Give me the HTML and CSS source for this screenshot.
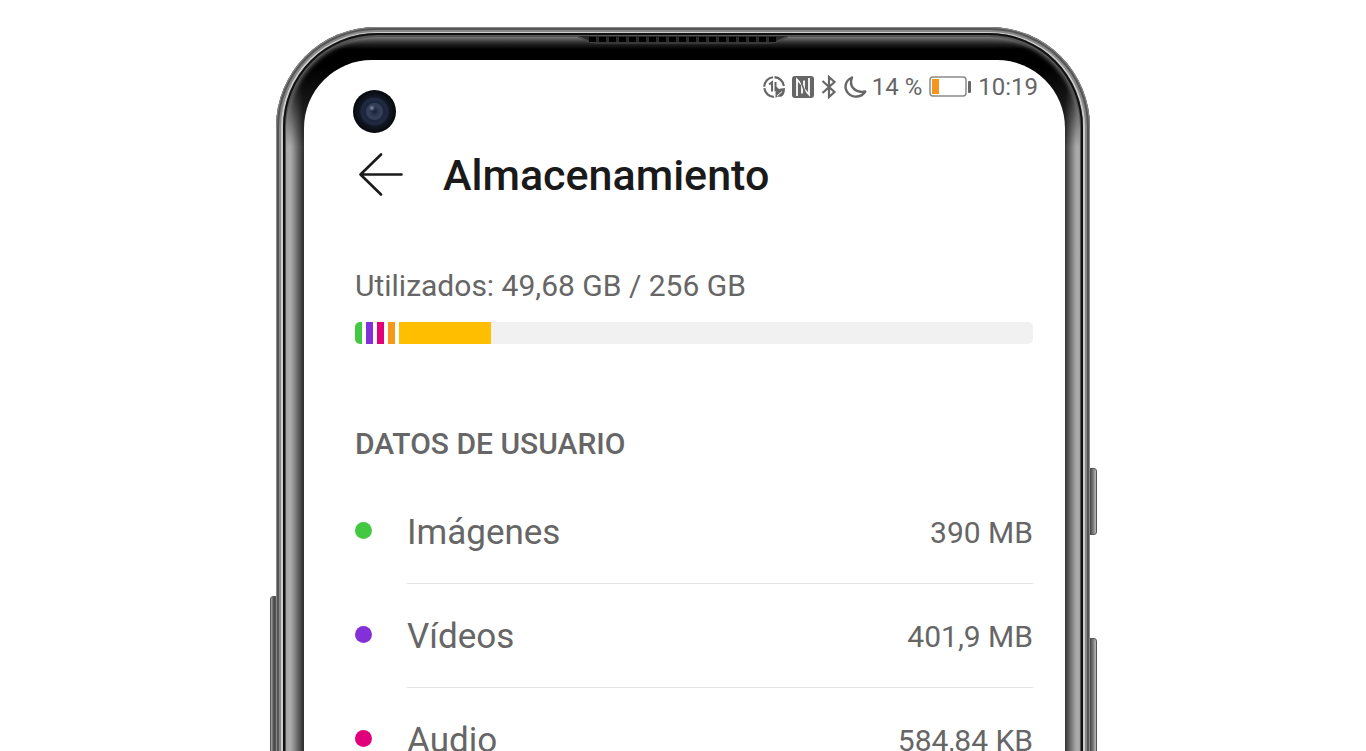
FILE: index.html
```
<!DOCTYPE html>
<html lang="es">
<head>
    <meta charset="UTF-8">
    <meta name="viewport" content="width=device-width, initial-scale=1.0">
    <title>Almacenamiento</title>
    <link rel="stylesheet" href="styles.css">
</head>
<body>
    <div class="phone">
        <!-- Side keys -->
        <span class="side-key key-left"></span>
        <span class="side-key key-volume"></span>
        <span class="side-key key-power"></span>

        <div class="phone-edge">
            <div class="phone-rim">
                <div class="phone-bezel">
                    <svg class="speaker" viewBox="0 0 210 8" aria-hidden="true">
                        <path d="M0 0H210L198 5Q195 7 190 7H20Q15 7 12 5Z" fill="#2b2b2b"/>
                        <path d="M0 1L12 6Q15 7 20 7H190Q195 7 198 6L210 1" fill="none" stroke="#484848"/>
                        <path d="M11 3.500H198" stroke="#000" stroke-width="5" stroke-dasharray="7 3"/>
                    </svg>

                    <main class="screen">
                        <span class="camera"></span>

                        <!-- Status bar -->
                        <div class="status-bar">
                            <svg class="status-icon icon-data" viewBox="0 0 24 24" aria-hidden="true">
                                <path d="M12 21.8A9.8 9.8 0 1 1 21.800 11" fill="none" stroke="#666" stroke-width="2.200" stroke-dasharray="14 1.500"/>
                                <path d="M7 9.500L10 7.200V16.500M13.500 7V15.500H17L14 12.500" fill="none" stroke="#666" stroke-width="2"/>
                                <path d="M13.500 19.500C13 15 17 13.500 23 13C23 19 21 23 15.500 21.500L13.500 23Z" fill="#666"/>
                                <path d="M15 21L20 16.500" stroke="#fff"/>
                            </svg>
                            <svg class="status-icon icon-nfc" viewBox="0 0 24 24" aria-hidden="true">
                                <rect x="1" y="1" width="22" height="22" rx="3" fill="#666"/>
                                <path d="M6 21V4.500L11 10V18.500" fill="none" stroke="#fff" stroke-width="1.800"/>
                                <path d="M18 3V19.500L13 14V5.500" fill="none" stroke="#fff" stroke-width="1.800"/>
                                <path d="M8 1.500L16 22.500" fill="none" stroke="#666" stroke-width="1.600"/>
                            </svg>
                            <svg class="status-icon icon-bluetooth" viewBox="0 0 18 24" aria-hidden="true">
                                <path d="M2.500 6L14.500 17L9 22V2L14.500 7L2.500 18" fill="none" stroke="#666" stroke-width="2.200"/>
                            </svg>
                            <svg class="status-icon icon-moon" viewBox="0 0 24 24" aria-hidden="true">
                                <path d="M9 2.500C2 5.500 .8 13 5 18C10 23.500 18.500 22.500 22.300 16.500C12 18.500 5.500 11 9 2.500Z" fill="none" stroke="#666" stroke-width="2.400" stroke-linejoin="round"/>
                            </svg>
                            <span class="battery-level">14 %</span>
                            <svg class="icon-battery" viewBox="0 0 42 22" aria-hidden="true">
                                <rect x="1" y="1" width="36" height="19" rx="3" fill="none" stroke="#8a8a8a" stroke-width="1.500"/>
                                <rect x="3" y="3" width="7" height="15" fill="#f7941d"/>
                                <rect x="39" y="5" width="3" height="12" rx="1" fill="#666"/>
                            </svg>
                            <time class="clock">10:19</time>
                        </div>

                        <header class="app-header">
                            <button class="back-btn" type="button" aria-label="Atrás">
                                <svg viewBox="0 0 44 44" aria-hidden="true">
                                    <path d="M22 1.500L1.500 21.500L22 41.500M1.500 21.500H42.500" fill="none" stroke="#1a1a1a" stroke-width="2.600" stroke-linecap="round" stroke-linejoin="round"/>
                                </svg>
                            </button>
                            <h1 class="app-title">Almacenamiento</h1>
                        </header>

                        <!-- Storage usage -->
                        <section class="usage">
                            <p class="usage-text">Utilizados: 49,68 GB / 256 GB</p>
                            <div class="usage-bar">
                                <span class="segment segment-images"></span>
                                <span class="segment segment-videos"></span>
                                <span class="segment segment-audio"></span>
                                <span class="segment segment-docs"></span>
                                <span class="segment segment-apps"></span>
                                <span class="segment-free"></span>
                            </div>
                        </section>

                        <section class="user-data">
                            <h2 class="section-title">DATOS DE USUARIO</h2>
                            <ul class="data-list">
                                <li class="data-item">
                                    <span class="dot dot-images"></span>
                                    <div class="data-row">
                                        <span class="data-name">Imágenes</span>
                                        <span class="data-size">390 MB</span>
                                    </div>
                                </li>
                                <li class="data-item">
                                    <span class="dot dot-videos"></span>
                                    <div class="data-row">
                                        <span class="data-name">Vídeos</span>
                                        <span class="data-size">401,9 MB</span>
                                    </div>
                                </li>
                                <li class="data-item">
                                    <span class="dot dot-audio"></span>
                                    <div class="data-row">
                                        <span class="data-name">Audio</span>
                                        <span class="data-size">584,84 KB</span>
                                    </div>
                                </li>
                            </ul>
                        </section>
                    </main>
                </div>
            </div>
        </div>
    </div>
</body>
</html>
```

FILE: styles.css
```
* {
    margin: 0;
    padding: 0;
    box-sizing: border-box;
}

body {
    font-family: Roboto, 'Noto Sans', sans-serif;
    background: #fff;
    color: #666;
    height: 100vh;
    padding-top: 27px;
    overflow: hidden;
}

/* Phone frame */
.phone {
    position: relative;
    width: 100%;
    max-width: 814px;
    margin: 0 auto;
}

.phone-edge {
    position: relative;
    padding: 6px 7px 0;
    border-radius: 100px 100px 0 0;
    background: #ccc;
    box-shadow: inset 0 0 0 1px #888, inset 0 0 0 3px #555, inset 0 0 0 5px #888;
}

.phone-rim {
    padding: 4px 3px 0;
    border-radius: 94px 94px 0 0;
    background: #555;
    box-shadow: inset 0 0 0 2px #111;
}

.phone-bezel {
    position: relative;
    padding: 23px 15px 0 18px;
    border-radius: 91px 91px 0 0;
    background:
        linear-gradient(to bottom, #666 0, #222 7px, #000 12px, #000 30px, transparent 110px),
        linear-gradient(to right, #bbb 0, #aaa 5px, #333 17px, #222 50%, #333 calc(100% - 15px), #aaa calc(100% - 4px), #bbb 100%);
    box-shadow: inset 0 0 5px #888;
}

.speaker {
    position: absolute;
    top: -1px;
    left: 50%;
    width: 210px;
    height: 8px;
    transform: translateX(-50%);
}

.side-key {
    position: absolute;
    width: 8px;
    border: 1px solid #555;
    background: linear-gradient(to right, #444, #777 50%, #bbb);
}

.key-left {
    left: -6px;
    top: 569px;
    height: 200px;
    border-radius: 3px 0 0 0;
    background: linear-gradient(to right, #aaa, #444 50%, #666);
}

.key-volume {
    right: -7px;
    top: 441px;
    height: 67px;
    border-radius: 0 3px 3px 0;
}

.key-power {
    right: -7px;
    top: 611px;
    height: 160px;
    border-radius: 0 3px 0 0;
}

/* Screen */
.screen {
    position: relative;
    min-height: 720px;
    padding: 13px 32px 0 51px;
    border-radius: 68px 68px 0 0;
    background: #fff;
}

.camera {
    position: absolute;
    top: 30px;
    left: 49px;
    width: 43px;
    height: 43px;
    border-radius: 50%;
    background:
        radial-gradient(circle at 44% 42%, rgba(190, 205, 230, 0.6) 0, transparent 3px),
        radial-gradient(circle, #18213a 0, #34405a 6px, #323d58 8px, #1b253c 9px, #202b42 13px, #111722 15px, #090c13 20px, #000 22px);
}

/* Status bar */
.status-bar {
    display: flex;
    align-items: center;
    justify-content: flex-end;
    gap: 5px;
    margin-right: -5px;
    font-size: 24px;
    line-height: 28px;
}

.status-icon {
    width: 24px;
    height: 24px;
}

.icon-bluetooth {
    width: 18px;
}

.icon-battery {
    width: 42px;
    height: 22px;
    margin: 0 2px;
}

/* Header */
.app-header {
    display: flex;
    align-items: center;
    gap: 40px;
    margin-top: 49px;
    padding-left: 4px;
}

.back-btn {
    width: 44px;
    height: 44px;
    border: none;
    background: none;
    cursor: pointer;
}

.back-btn svg {
    display: block;
}

.app-title {
    color: #1a1a1a;
    font-size: 43px;
    font-weight: 500;
    line-height: 50px;
}

/* Storage usage */
.usage {
    margin-top: 68px;
}

.usage-text {
    font-size: 30px;
    line-height: 36px;
}

.usage-bar {
    display: flex;
    height: 22px;
    margin-top: 18px;
    border-radius: 5px;
    overflow: hidden;
}

.segment {
    width: 7px;
    margin-right: 4px;
}

.segment-images,
.dot-images {
    background: #43c844;
}

.segment-videos,
.dot-videos {
    background: #8430d8;
}

.segment-audio,
.dot-audio {
    background: #e1007a;
}

.segment-docs {
    background: #f7981d;
}

.segment-apps {
    width: 92px;
    margin-right: 0;
    background: #ffbf00;
}

.segment-free {
    flex: 1;
    background: #f1f1f1;
}

/* User data */
.user-data {
    margin-top: 82px;
}

.section-title {
    font-size: 30px;
    font-weight: 500;
    line-height: 36px;
}

.data-list {
    margin-top: 18px;
    list-style: none;
}

.data-item {
    display: flex;
    align-items: center;
    gap: 35px;
}

.dot {
    width: 17px;
    height: 17px;
    margin-bottom: 4px;
    border-radius: 50%;
}

.data-row {
    flex: 1;
    display: flex;
    align-items: center;
    justify-content: space-between;
    padding: 33px 0 30px;
    border-bottom: 1px solid #e4e4e4;
    line-height: 40px;
}

.data-name {
    font-size: 35px;
}

.data-size {
    font-size: 30px;
}
```
